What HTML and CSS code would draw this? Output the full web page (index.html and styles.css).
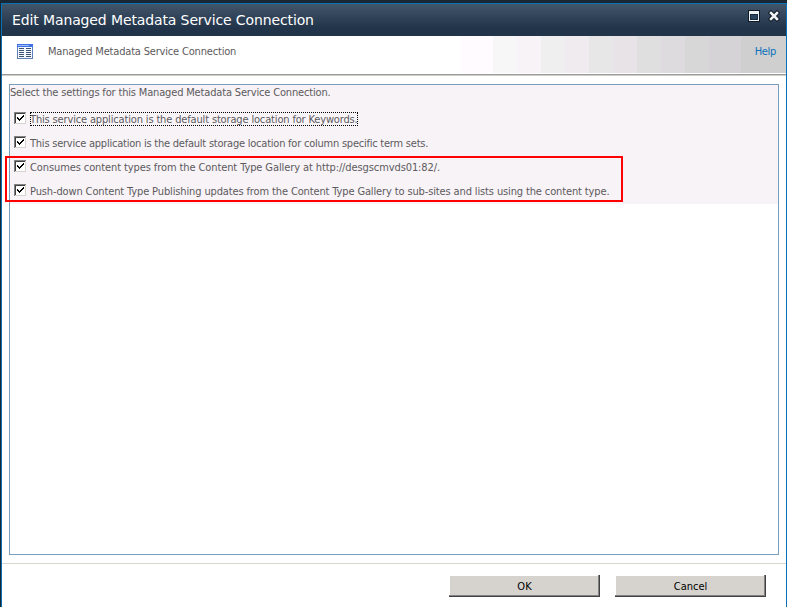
FILE: index.html
```
<!DOCTYPE html>
<html lang="en">
<head>
<meta charset="utf-8">
<title>Edit Managed Metadata Service Connection</title>
<link rel="stylesheet" href="styles.css">
</head>
<body>
<div class="dialog">
  <header class="titlebar">
    <h1>Edit Managed Metadata Service Connection</h1>
    <svg class="maximize" width="12" height="12" viewBox="0 0 12 12" shape-rendering="crispEdges"><path fill="#101b29" d="M0 0h12v12H0z"/><path fill="#eef0f2" d="M1 1h10v10H1z"/><path fill="#17293d" d="M2 4h8v6H2z"/><path fill="#2c425d" d="M3 5h6v4H3z"/></svg>
    <svg class="close" width="12" height="12" viewBox="0 0 12 12"><path d="M3 3l6 6m0-6l-6 6" stroke="#101b29" stroke-width="4.5" stroke-linecap="square"/><path d="M3 3l6 6m0-6l-6 6" stroke="#eef0f2" stroke-width="2.5" stroke-linecap="square"/></svg>
  </header>
  <section class="banner">
    <svg class="list-icon" width="16" height="15" viewBox="0 0 16 15" shape-rendering="crispEdges"><path fill="#5f7fb8" d="M0 0h16v15H0z"/><path fill="#3f73e3" d="M0 0h16v3H0z"/><path fill="#9dbcf7" d="M1 1h11v1H1z"/><path fill="#f4f8ff" d="M1 3h14v11H1z"/><path stroke="#405273" d="M2 4.500h5m2 0h5M2 6.500h5m2 0h5M2 8.500h5m2 0h5M2 10.500h5m2 0h5M2 12.500h5m2 0h5"/></svg>
    <h2>Managed Metadata Service Connection</h2>
    <a class="help">Help</a>
  </section>
  <main class="panel">
    <div class="settings">
      <p class="intro">Select the settings for this Managed Metadata Service Connection.</p>
      <div class="option"><svg class="check" width="12" height="12"><use href="#box"/></svg><span class="label keywords focused">This service application is the default storage location for Keywords.</span></div>
      <div class="option"><svg class="check" width="12" height="12"><use href="#box"/></svg><span class="label columns">This service application is the default storage location for column specific term sets.</span></div>
      <div class="option"><svg class="check" width="12" height="12"><use href="#box"/></svg><span class="label consumes">Consumes content types from the Content Type Gallery at http://desgscmvds01:82/.</span></div>
      <div class="option"><svg class="check" width="12" height="12"><use href="#box"/></svg><span class="label pushdown">Push-down Content Type Publishing updates from the Content Type Gallery to sub-sites and lists using the content type.</span></div>
      <div class="highlight"></div>
    </div>
  </main>
  <footer class="actions">
    <button>OK</button>
    <button>Cancel</button>
  </footer>
</div>
<svg class="defs" width="0" height="0"><defs><g id="box" shape-rendering="crispEdges"><path fill="#d6d3ce" d="M0 0h12v12H0z"/><path fill="#848284" d="M0 0h12v1H1v11H0z"/><path fill="#424142" d="M1 1h10v1H2v9H1z"/><path fill="#fff" d="M2 2h9v9H2z"/><path fill="#000" d="M3 5h1v2H3zM4 6h1v2H4zM5 7h1v2H5zM6 6h1v2H6zM7 5h1v2H7zM8 4h1v2H8zM9 3h1v2H9z"/></g></defs></svg>
</body>
</html>
```
FILE: styles.css
```
* { box-sizing: border-box; }
body { margin: 0; height: 607px; overflow: hidden; padding: 3px 0 0 1px; background: #182733; font: 11px/14px "DejaVu Sans Condensed", "DejaVu Sans", sans-serif; color: #5d5a5d; }
h1, h2, p { margin: 0; font-weight: normal; white-space: nowrap; }
.dialog { height: 604px; border: 1px solid #0871b5; border-bottom: 0; background: #fff; display: flex; flex-direction: column; }
.titlebar { height: 32px; display: flex; align-items: flex-start; background: linear-gradient(#425569, #21344a 75%); padding: 0 6px 0 10px; }
.titlebar h1 { flex: 1; font: 14px/32px "DejaVu Sans", sans-serif; color: #fff; letter-spacing: -0.12px; }
.maximize { margin-top: 6px; }
.close { margin: 6px 0 0 8px; }
.banner { height: 40px; display: flex; align-items: flex-start; padding: 8px 10px 0 15px; border-bottom: 1px solid #cecfc6; box-shadow: inset 0 -1px #9c9a9c, inset 0 -2px #fff;
  background: linear-gradient(90deg, #fff 459px, #fffbff 459px 491px, #f7f7f7 491px 515px, #f7f3f7 515px 539px, #efefef 539px 563px, #efebef 563px 587px, #e7e7e7 587px 611px, #e7e3e7 611px 635px, #dedfde 635px 659px, #dedbde 659px 683px, #d6d7d6 683px 707px, #d6d3d6 707px 739px, #cecfce 739px); }
.banner h2 { flex: 1; margin-left: 15px; font-size: 11px; line-height: 16px; letter-spacing: -0.18px; }
.help { color: #0871bd; line-height: 16px; letter-spacing: -0.3px; }
.panel { width: 770px; height: 471px; margin: 8px 0 0 7px; border: 1px solid #7b9ebd; flex: none; }
.settings { height: 119px; background: #f7f3f7; position: relative; }
.intro { height: 21px; line-height: 16px; letter-spacing: -0.165px; }
.option { height: 24px; display: flex; align-items: center; padding-left: 4px; }
.check { margin-right: 4px; flex: none; }
.label { white-space: nowrap; height: 14px; line-height: 16px; }
.keywords { letter-spacing: -0.155px; }
.columns { letter-spacing: -0.23px; }
.consumes { letter-spacing: -0.1px; }
.pushdown { letter-spacing: -0.13px; }
.focused { outline: 1px dotted #000; outline-offset: -1px; }
.highlight { position: absolute; left: -5px; top: 71px; width: 618px; height: 46px; border: 2px solid #f00; }
.option .label { margin-top: 1px; }
.actions { margin-top: 8px; border-top: 1px solid #d6d7ce; height: 44px; padding: 11px 20px 0 0; display: flex; justify-content: flex-end; gap: 15px; }
button { width: 151px; height: 22px; padding: 2px 0 0 1px; font: 11px/18px "DejaVu Sans Condensed", sans-serif; color: #000; background: #d6d3ce; border: solid #424142; border-width: 0 1px 1px 0; box-shadow: inset -1px -1px #848284, inset 1px 1px #fff; }
.defs { position: absolute; }
```
